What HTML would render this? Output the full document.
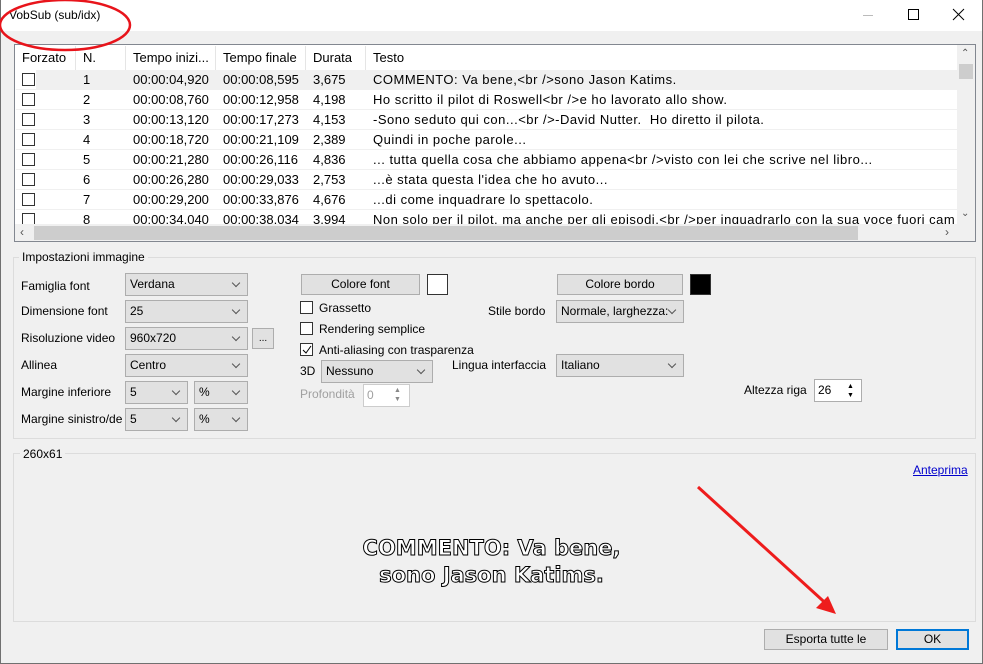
<!DOCTYPE html>
<html><head><meta charset="utf-8"><style>
*{box-sizing:border-box;margin:0;padding:0}
body{width:983px;height:664px;overflow:hidden;background:#f0f0f0;font-family:"Liberation Sans",sans-serif;font-size:12px;color:#000;position:relative}
.a{position:absolute;white-space:nowrap}
.win{position:absolute;left:0;top:0;width:983px;height:664px;border:1px solid #707070;border-top:none}
.title{position:absolute;left:1px;top:0;width:981px;height:31px;background:#fff}
.lv{position:absolute;left:14px;top:44px;width:962px;height:198px;border:1px solid #828790;background:#fff;overflow:hidden;font-size:13px}
.hd{position:absolute;top:1px;height:24px;line-height:24px;padding-left:7px;border-right:1px solid #e5e5e5}
.row{position:absolute;left:1px;width:941px;height:20px;border-bottom:1px solid #f0f0f0;line-height:19px}
.row span{position:absolute;top:0}
.row span.t{letter-spacing:0.5px}
.cb{position:absolute;width:13px;height:13px;border:1px solid #333;background:#fff}
.grp{position:absolute;border:1px solid #dcdcdc}
.gl{position:absolute;background:#f0f0f0;padding:0 3px}
.cmb{position:absolute;height:23px;border:1px solid #adadad;background:#e1e1e1;line-height:21px;padding-left:4px}
.cmb:after{content:"";position:absolute;right:8px;top:6px;width:5px;height:5px;border-right:1px solid #555;border-bottom:1px solid #555;transform:rotate(45deg)}
.btn{position:absolute;height:21px;border:1px solid #adadad;background:#e1e1e1;text-align:center;line-height:19px}
.sp{position:absolute;height:23px;border:1px solid #adadad;background:#fff;line-height:20px;padding-left:3px}
.sub{position:absolute;left:0;width:983px;text-align:center;font-family:"DejaVu Sans",sans-serif;font-size:21px;font-weight:bold;color:#fff;-webkit-text-stroke:1px #000;letter-spacing:0px}
</style></head><body>
<div class="win"></div>
<div class="title"></div>
<div class="a" style="left:9px;top:8px;font-size:12px">VobSub (sub/idx)</div>
<div class="a" style="left:863px;top:15px;width:10px;height:1px;background:#bbb"></div>
<div class="a" style="left:908px;top:9px;width:11px;height:11px;border:1px solid #000"></div>
<svg class="a" style="left:952px;top:8px" width="13" height="13"><path d="M1 1L12 12M12 1L1 12" stroke="#000" stroke-width="1"/></svg>

<div class="lv">
<div class="hd" style="left:0;width:61px">Forzato</div>
<div class="hd" style="left:61px;width:50px">N.</div>
<div class="hd" style="left:111px;width:90px">Tempo inizi...</div>
<div class="hd" style="left:201px;width:90px">Tempo finale</div>
<div class="hd" style="left:291px;width:60px">Durata</div>
<div class="hd" style="left:351px;width:591px;border:none">Testo</div>

<div class="row" style="top:25px;"><div style="position:absolute;left:20px;top:0;width:921px;height:19px;background:#f0f0f0"></div></div>
<div class="row" style="top:25px;background:transparent"><div class="cb" style="left:6px;top:3px"></div><span style="left:67px">1</span><span style="left:117px">00:00:04,920</span><span style="left:207px">00:00:08,595</span><span style="left:297px">3,675</span><span class="t" style="left:357px">COMMENTO: Va bene,&lt;br /&gt;sono Jason Katims.</span></div>
<div class="row" style="top:45px"><div class="cb" style="left:6px;top:3px"></div><span style="left:67px">2</span><span style="left:117px">00:00:08,760</span><span style="left:207px">00:00:12,958</span><span style="left:297px">4,198</span><span class="t" style="left:357px">Ho scritto il pilot di Roswell&lt;br /&gt;e ho lavorato allo show.</span></div>
<div class="row" style="top:65px"><div class="cb" style="left:6px;top:3px"></div><span style="left:67px">3</span><span style="left:117px">00:00:13,120</span><span style="left:207px">00:00:17,273</span><span style="left:297px">4,153</span><span class="t" style="left:357px">-Sono seduto qui con...&lt;br /&gt;-David Nutter.&nbsp; Ho diretto il pilota.</span></div>
<div class="row" style="top:85px"><div class="cb" style="left:6px;top:3px"></div><span style="left:67px">4</span><span style="left:117px">00:00:18,720</span><span style="left:207px">00:00:21,109</span><span style="left:297px">2,389</span><span class="t" style="left:357px">Quindi in poche parole...</span></div>
<div class="row" style="top:105px"><div class="cb" style="left:6px;top:3px"></div><span style="left:67px">5</span><span style="left:117px">00:00:21,280</span><span style="left:207px">00:00:26,116</span><span style="left:297px">4,836</span><span class="t" style="left:357px">... tutta quella cosa che abbiamo appena&lt;br /&gt;visto con lei che scrive nel libro...</span></div>
<div class="row" style="top:125px"><div class="cb" style="left:6px;top:3px"></div><span style="left:67px">6</span><span style="left:117px">00:00:26,280</span><span style="left:207px">00:00:29,033</span><span style="left:297px">2,753</span><span class="t" style="left:357px">...è stata questa l'idea che ho avuto...</span></div>
<div class="row" style="top:145px"><div class="cb" style="left:6px;top:3px"></div><span style="left:67px">7</span><span style="left:117px">00:00:29,200</span><span style="left:207px">00:00:33,876</span><span style="left:297px">4,676</span><span class="t" style="left:357px">...di come inquadrare lo spettacolo.</span></div>
<div class="row" style="top:165px"><div class="cb" style="left:6px;top:3px"></div><span style="left:67px">8</span><span style="left:117px">00:00:34,040</span><span style="left:207px">00:00:38,034</span><span style="left:297px">3,994</span><span class="t" style="left:357px">Non solo per il pilot, ma anche per gli episodi,&lt;br /&gt;per inquadrarlo con la sua voce fuori cam</span></div>
<div class="a" style="left:942px;top:0;width:18px;height:180px;background:#f0f0f0"></div>
<div class="a" style="left:944px;top:19px;width:14px;height:15px;background:#cdcdcd"></div>
<div class="a" style="left:946px;top:3px;font-size:10px;color:#555">&#8963;</div>
<div class="a" style="left:946px;top:163px;font-size:10px;color:#555">&#8964;</div>
<div class="a" style="left:0;top:179px;width:942px;height:18px;background:#f0f0f0"></div>
<div class="a" style="left:19px;top:181px;width:824px;height:14px;background:#cdcdcd"></div>
<div class="a" style="left:5px;top:180px;font-size:12px;color:#555">&#8249;</div>
<div class="a" style="left:930px;top:180px;font-size:12px;color:#555">&#8250;</div>
<div class="a" style="left:942px;top:179px;width:18px;height:18px;background:#f0f0f0"></div>
</div>

<div class="grp" style="left:13px;top:257px;width:963px;height:182px"></div>
<div class="gl" style="left:19px;top:250px">Impostazioni immagine</div>
<div class="a" style="left:21px;top:279px">Famiglia font</div>
<div class="a" style="left:21px;top:304px">Dimensione font</div>
<div class="a" style="left:21px;top:331px">Risoluzione video</div>
<div class="a" style="left:21px;top:358px">Allinea</div>
<div class="a" style="left:21px;top:385px">Margine inferiore</div>
<div class="a" style="left:21px;top:412px">Margine sinistro/de</div>
<div class="cmb" style="left:125px;top:273px;width:123px">Verdana</div>
<div class="cmb" style="left:125px;top:300px;width:123px">25</div>
<div class="cmb" style="left:125px;top:327px;width:123px">960x720</div>
<div class="btn" style="left:252px;top:328px;width:22px;font-size:10px">...</div>
<div class="cmb" style="left:125px;top:354px;width:123px">Centro</div>
<div class="cmb" style="left:125px;top:381px;width:63px">5</div>
<div class="cmb" style="left:194px;top:381px;width:54px">%</div>
<div class="cmb" style="left:125px;top:408px;width:63px">5</div>
<div class="cmb" style="left:194px;top:408px;width:54px">%</div>

<div class="btn" style="left:301px;top:274px;width:119px">Colore font</div>
<div class="a" style="left:427px;top:274px;width:21px;height:21px;border:1px solid #333;background:#fff"></div>
<div class="cb" style="left:300px;top:301px"></div><div class="a" style="left:319px;top:301px">Grassetto</div>
<div class="cb" style="left:300px;top:322px"></div><div class="a" style="left:319px;top:322px">Rendering semplice</div>
<div class="cb" style="left:300px;top:343px"></div><svg class="a" style="left:302px;top:345px" width="10" height="10"><path d="M1 5L4 8L9 1" stroke="#000" fill="none"/></svg><div class="a" style="left:319px;top:343px">Anti-aliasing con trasparenza</div>
<div class="a" style="left:300px;top:364px">3D</div>
<div class="cmb" style="left:321px;top:360px;width:112px">Nessuno</div>
<div class="a" style="left:300px;top:387px;color:#a0a0a0">Profondità</div>
<div class="sp" style="left:363px;top:384px;width:47px;color:#a0a0a0;border-color:#ccc">0</div>
<div class="a" style="left:394px;top:386px;font-size:7px;color:#888;line-height:9px">▲<br>▼</div>

<div class="btn" style="left:557px;top:274px;width:126px">Colore bordo</div>
<div class="a" style="left:690px;top:274px;width:21px;height:21px;border:1px solid #333;background:#000"></div>
<div class="a" style="left:488px;top:304px">Stile bordo</div>
<div class="cmb" style="left:556px;top:300px;width:128px">Normale, larghezza:</div>
<div class="a" style="left:452px;top:358px">Lingua interfaccia</div>
<div class="cmb" style="left:556px;top:354px;width:128px">Italiano</div>
<div class="a" style="left:744px;top:383px">Altezza riga</div>
<div class="sp" style="left:814px;top:379px;width:48px">26</div>
<div class="a" style="left:847px;top:382px;font-size:7px;color:#000;line-height:9px">▲<br>▼</div>

<div class="grp" style="left:13px;top:453px;width:963px;height:169px"></div>
<div class="gl" style="left:20px;top:447px">260x61</div>
<div class="a" style="left:913px;top:463px;color:#0000cc;text-decoration:underline">Anteprima</div>
<div class="sub" style="top:536px">COMMENTO: Va bene,</div>
<div class="sub" style="top:563px">sono Jason Katims.</div>

<div class="btn" style="left:764px;top:629px;width:124px">Esporta tutte le</div>
<div class="btn" style="left:896px;top:629px;width:73px;border:2px solid #0078d7;line-height:17px">OK</div>

<svg class="a" style="left:0;top:0" width="983" height="664">
<ellipse cx="65" cy="25" rx="65" ry="25" fill="none" stroke="#e8141b" stroke-width="2.5"/>
<line x1="698" y1="487" x2="832" y2="609" stroke="#ee1c1c" stroke-width="3"/>
<path d="M836 614L816 608L828 596Z" fill="#ee1c1c"/>
</svg>
</body></html>
